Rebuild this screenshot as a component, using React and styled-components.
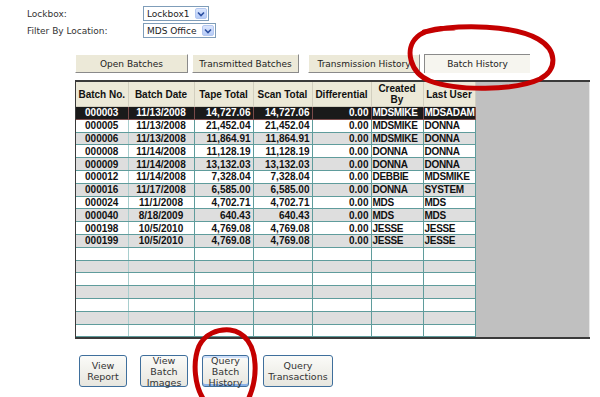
import React from 'react';
import styled, { createGlobalStyle, css } from 'styled-components';

const GlobalStyle = createGlobalStyle`
  body {
    margin: 0;
    background: #ffffff;
    font-family: 'DejaVu Sans', Verdana, sans-serif;
  }
`;

const Page = styled.div`
  position: relative;
  width: 600px;
  height: 397px;
  overflow: hidden;
  background: #ffffff;
`;

const FilterForm = styled.div`
  display: grid;
  grid-template-columns: 116px auto;
  row-gap: 2px;
  align-items: center;
  padding: 6px 0 0 27px;
`;

const FieldLabel = styled.span`
  font-size: 9px;
  color: #333;
`;

const FakeSelect = styled.div`
  display: flex;
  align-items: center;
  justify-content: space-between;
  width: ${props => props.width}px;
  height: 15px;
  box-sizing: border-box;
  border: 1px solid #7f9db9;
  background: #fff;
  padding-left: 3px;
  font-size: 9px;
  color: #222;
`;

const DropButton = styled.span`
  display: flex;
  align-items: center;
  justify-content: center;
  width: 12px;
  height: 11px;
  margin-right: 1px;
  background: linear-gradient(#dbe6fd, #b6cbf7);
  border: 1px solid #b4c8f0;
  border-radius: 2px;
  box-sizing: border-box;
`;

const TabBar = styled.div`
  display: flex;
  margin: 16px 0 0 75px;
  height: 19px;
`;

const Tab = styled.div`
  display: flex;
  align-items: center;
  justify-content: center;
  width: ${props => props.width}px;
  margin-right: ${props => props.gap}px;
  box-sizing: border-box;
  font-size: 9px;
  color: #222;
  ${props => props.active ? css`
    background: #f6f5ef;
    border-top: 1px solid #8a8a8a;
    border-left: 1px solid #8a8a8a;
  ` : css`
    background: #ece9d8;
    border-top: 1px solid #fff;
    border-left: 1px solid #fff;
    border-right: 1px solid #8a8a8a;
    border-bottom: 1px solid #8a8a8a;
  `}
`;

const GridFrame = styled.div`
  display: flex;
  margin: 7px 0 0 75px;
  width: 515px;
  box-sizing: border-box;
  border-top: 2px solid #3a3a3a;
  border-bottom: 2px solid #3a3a3a;
  border-left: 1px solid #3a3a3a;
`;

const DataTable = styled.table`
  table-layout: fixed;
  border-collapse: collapse;
  width: 399px;
  font-family: 'Liberation Sans', Arial, sans-serif;
  font-weight: bold;
  font-size: 10px;
`;

const HeadCell = styled.th`
  height: 24px;
  padding: 0 2px;
  background: #ece9d8;
  border-right: 1px solid #d2cfbf;
  border-bottom: 1px solid #d2cfbf;
  font-size: 10px;
  line-height: 11px;
  color: #111;
  text-align: center;
  vertical-align: middle;
`;

const Row = styled.tr`
  height: 12.8px;
  background: ${props => props.selected ? '#1a1a1a' : props.shaded ? '#dedede' : '#ffffff'};
  color: ${props => props.selected ? '#ffffff' : '#111'};
`;

const Cell = styled.td`
  padding: ${props => props.align === 'left' ? '0 0 0 1px' : '0 2px'};
  letter-spacing: ${props => props.align === 'left' ? '-0.3px' : '0'};
  line-height: 11px;
  white-space: nowrap;
  overflow: hidden;
  text-align: ${props => props.align || 'left'};
  border: 1px solid ${props => props.selected ? '#7a4a4a' : '#5f9c9c'};
  border-top-color: #5f9c9c;
  &:first-child {
    border-left: none;
    border-right-color: ${props => props.selected ? '#7a4a4a' : '#a8cece'};
  }
`;

const Filler = styled.div`
  flex: 1;
  background: #c0c0c0;
  border-right: 1px solid #e8e8e8;
`;

const ActionBar = styled.div`
  display: flex;
  margin: 16px 0 0 79px;
`;

const ActionButton = styled.div`
  display: flex;
  align-items: center;
  justify-content: center;
  width: ${props => props.width}px;
  height: 32px;
  margin-right: ${props => props.gap}px;
  box-sizing: border-box;
  border: 1px solid #3f6f9c;
  border-radius: 3px;
  background: linear-gradient(#fbfbf8, #e7e6df);
  font-size: 9.5px;
  line-height: 11px;
  color: #333;
  text-align: center;
  ${props => props.focused && css`
    box-shadow: inset 0 -2px 0 #8cb2e6, inset 0 2px 0 #cfe0fa;
  `}
`;

const Annotation = styled.svg`
  position: absolute;
  left: 0;
  top: 0;
  pointer-events: none;
`;

const rows = [
  ['000003', '11/13/2008', '14,727.06', '14,727.06', '0.00', 'MDSMIKE', 'MDSADAM'],
  ['000005', '11/13/2008', '21,452.04', '21,452.04', '0.00', 'MDSMIKE', 'DONNA'],
  ['000006', '11/13/2008', '11,864.91', '11,864.91', '0.00', 'MDSMIKE', 'DONNA'],
  ['000008', '11/14/2008', '11,128.19', '11,128.19', '0.00', 'DONNA', 'DONNA'],
  ['000009', '11/14/2008', '13,132.03', '13,132.03', '0.00', 'DONNA', 'DONNA'],
  ['000012', '11/14/2008', '7,328.04', '7,328.04', '0.00', 'DEBBIE', 'MDSMIKE'],
  ['000016', '11/17/2008', '6,585.00', '6,585.00', '0.00', 'DONNA', 'SYSTEM'],
  ['000024', '11/1/2008', '4,702.71', '4,702.71', '0.00', 'MDS', 'MDS'],
  ['000040', '8/18/2009', '640.43', '640.43', '0.00', 'MDS', 'MDS'],
  ['000198', '10/5/2010', '4,769.08', '4,769.08', '0.00', 'JESSE', 'JESSE'],
  ['000199', '10/5/2010', '4,769.08', '4,769.08', '0.00', 'JESSE', 'JESSE'],
];

const columns = [
  { title: 'Batch No.', width: 52, align: 'center' },
  { title: 'Batch Date', width: 66, align: 'center' },
  { title: 'Tape Total', width: 59, align: 'right' },
  { title: 'Scan Total', width: 59, align: 'right' },
  { title: 'Differential', width: 59, align: 'right' },
  { title: 'Created By', width: 52, align: 'left' },
  { title: 'Last User', width: 52, align: 'left' },
];

const EMPTY_ROWS = 7;

const Chevron = () => (
  <svg width="8" height="6" viewBox="0 0 8 6">
    <path d="M1 1.5 L4 4.5 L7 1.5" fill="none" stroke="#2a4ea0" strokeWidth="1.6" />
  </svg>
);

const tabs = [
  { label: 'Open Batches', width: 113, gap: 4 },
  { label: 'Transmitted Batches', width: 107, gap: 9 },
  { label: 'Transmission History', width: 112, gap: 4 },
  { label: 'Batch History', width: 106, gap: 0, active: true },
];

const actions = [
  { lines: ['View', 'Report'], width: 48, gap: 13 },
  { lines: ['View', 'Batch', 'Images'], width: 48, gap: 14 },
  { lines: ['Query', 'Batch', 'History'], width: 47, gap: 14, focused: true },
  { lines: ['Query', 'Transactions'], width: 70, gap: 0 },
];

const App = () => {
  const allRows = [...rows, ...Array.from({ length: EMPTY_ROWS }, () => null)];

  return (
    <Page>
      <GlobalStyle />

      <FilterForm>
        <FieldLabel>Lockbox:</FieldLabel>
        <FakeSelect width={66}>
          Lockbox1
          <DropButton><Chevron /></DropButton>
        </FakeSelect>
        <FieldLabel>Filter By Location:</FieldLabel>
        <FakeSelect width={73}>
          MDS Office
          <DropButton><Chevron /></DropButton>
        </FakeSelect>
      </FilterForm>

      <TabBar>
        {tabs.map(tab => (
          <Tab key={tab.label} width={tab.width} gap={tab.gap} active={tab.active}>
            {tab.label}
          </Tab>
        ))}
      </TabBar>

      <GridFrame>
        <DataTable>
          <colgroup>
            {columns.map(col => <col key={col.title} style={{ width: col.width }} />)}
          </colgroup>
          <thead>
            <tr>
              {columns.map(col => <HeadCell key={col.title}>{col.title}</HeadCell>)}
            </tr>
          </thead>
          <tbody>
            {allRows.map((row, i) => {
              const selected = i === 0;
              return (
                <Row key={i} selected={selected} shaded={i % 2 === 0}>
                  {columns.map((col, c) => (
                    <Cell key={c} align={col.align} selected={selected}>
                      {row ? row[c] : ''}
                    </Cell>
                  ))}
                </Row>
              );
            })}
          </tbody>
        </DataTable>
        <Filler />
      </GridFrame>

      <ActionBar>
        {actions.map(a => (
          <ActionButton key={a.lines.join(' ')} width={a.width} gap={a.gap} focused={a.focused}>
            <span>
              {a.lines.map((l, i) => (
                <React.Fragment key={l}>
                  {i > 0 && <br />}
                  {l}
                </React.Fragment>
              ))}
            </span>
          </ActionButton>
        ))}
      </ActionBar>

      {/* red hand-drawn annotation marks */}
      <Annotation width="600" height="397" viewBox="0 0 600 397">
        <path
          d="M424 32 C462 23, 515 26, 538 39 C557 50, 558 69, 540 79 C514 91, 457 91, 430 81 C410 73, 404 49, 417 37 C424 30, 440 28, 454 28"
          fill="none" stroke="#c40000" strokeWidth="5" strokeLinecap="round" strokeLinejoin="round"
        />
        <path
          d="M204 400 C195 387, 192 363, 199 346 C205 334, 217 329, 230 330 C245 332, 254 345, 255 364 C256 380, 252 392, 247 402"
          fill="none" stroke="#c40000" strokeWidth="5" strokeLinecap="round" strokeLinejoin="round"
        />
      </Annotation>
    </Page>
  );
};

export default App;
